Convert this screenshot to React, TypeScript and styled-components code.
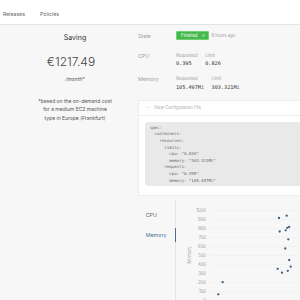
import React from "react";
import styled, { createGlobalStyle } from "styled-components";
import { ChevronDown, RefreshCw } from "lucide-react";

const GlobalStyle = createGlobalStyle`
  html, body {
    margin: 0;
    padding: 0;
    background: #f7f7f7;
    font-family: Inter, "Liberation Sans", sans-serif;
    width: 300px;
    height: 300px;
    overflow: hidden;
  }
`;

const dots = [
  [103, 18], [110.7, 15.7], [103.7, 31.5], [109.7, 30.3], [111.3, 27.8],
  [113.2, 27], [112.3, 39.3], [109.3, 48.5], [113.2, 60], [114.7, 66.7],
  [101.7, 68.8], [106, 72.7], [111.8, 70.8], [46.7, 82.2], [42.3, 94.3],
];

const ticks = [1000, 900, 800, 700, 600, 500, 400, 300, 200, 100, 0];

const config = `spec:
  containers:
    resources:
      limits:
        cpu: "0.826"
        memory: "303.321Mi"
      requests:
        cpu: "0.395"
        memory: "105.497Mi"`;

export default function App() {
  return (
    <Page>
      <GlobalStyle />
      <Header>
        <Tab>Releases</Tab>
        <Tab>Policies</Tab>
      </Header>
      <Main>
        <SavingPanel>
          <SavingTitle>Saving</SavingTitle>
          <Price>€1217.49</Price>
          <PerMonth>/month*</PerMonth>
          <Footnote>
            *based on the on-demand cost
            <br />
            for a medium EC2 machine
            <br />
            type in Europe (Frankfurt)
          </Footnote>
        </SavingPanel>

        <Details>
          <Row $top={0}>
            <Label>State</Label>
            <StateValue>
              <Badge>
                Finished
                <RefreshCw size={5} strokeWidth={2.5} />
              </Badge>
              <Ago>8 hours ago</Ago>
            </StateValue>
          </Row>
          <Row $top={12.6}>
            <Label>CPU</Label>
            <Metrics>
              <Metric>
                <MetricLabel>Requested</MetricLabel>
                <MetricValue>0.395</MetricValue>
              </Metric>
              <Metric>
                <MetricLabel>Limit</MetricLabel>
                <MetricValue>0.826</MetricValue>
              </Metric>
            </Metrics>
          </Row>
          <Row $top={9}>
            <Label>Memory</Label>
            <Metrics>
              <Metric>
                <MetricLabel>Requested</MetricLabel>
                <MetricValue>105.497Mi</MetricValue>
              </Metric>
              <Metric>
                <MetricLabel>Limit</MetricLabel>
                <MetricValue>303.321Mi</MetricValue>
              </Metric>
            </Metrics>
          </Row>

          <ConfigCard>
            <ConfigHeader>
              <ChevronDown size={5} strokeWidth={2} />
              View Configuration File
            </ConfigHeader>
            <ConfigBody>
              <Code>{config}</Code>
            </ConfigBody>
          </ConfigCard>

          <ChartSection>
            <ChartTabs>
              <ChartTab>CPU</ChartTab>
              <ChartTab $active>Memory</ChartTab>
            </ChartTabs>
            <ChartArea>
              <svg width="123" height="100" viewBox="0 0 123 100">
                <text
                  x="0"
                  y="0"
                  transform="translate(14.5 55) rotate(-90)"
                  textAnchor="middle"
                  fontSize="4.4"
                  fill="#aaa"
                  fontFamily="Inter, sans-serif"
                >
                  Memory
                </text>
                {ticks.map((t, i) => {
                  const y = 10.3 + i * 9.02;
                  return (
                    <g key={t}>
                      <line x1="33" x2="123" y1={y} y2={y} stroke="#ececec" strokeWidth="0.5" />
                      <text
                        x="30"
                        y={y + 1.5}
                        textAnchor="end"
                        fontSize="4.2"
                        fill="#999"
                        fontFamily="Inter, sans-serif"
                      >
                        {t}
                      </text>
                    </g>
                  );
                })}
                {dots.map(([x, y], i) => (
                  <circle key={i} cx={x} cy={y} r="1.15" fill="#3b5f82" />
                ))}
              </svg>
            </ChartArea>
          </ChartSection>
        </Details>
      </Main>
    </Page>
  );
}

const Page = styled.div`
  width: 300px;
  height: 300px;
  overflow: hidden;
`;

const Header = styled.div`
  height: 25px;
  box-sizing: border-box;
  padding: 3px 0 0 3px;
  display: flex;
  align-items: center;
  gap: 15px;
  background: #fff;
  border-bottom: 1px solid #e4e4e4;
`;

const Tab = styled.div`
  font-size: 5.2px;
  color: #666;
`;

const Main = styled.div`
  display: flex;
`;

const SavingPanel = styled.div`
  width: 124px;
  flex-shrink: 0;
  padding: 7.5px 0 0 13px;
  text-align: center;
  color: #444;
`;

const SavingTitle = styled.div`
  font-size: 7px;
  line-height: 9px;
  color: #333;
`;

const Price = styled.div`
  margin-top: 13px;
  font-size: 12px;
  line-height: 14px;
  font-weight: 300;
  color: #444;
  padding-right: 8px;
`;

const PerMonth = styled.div`
  margin-top: 7.7px;
  font-size: 5px;
  line-height: 7px;
  font-style: italic;
  color: #555;
`;

const Footnote = styled.div`
  margin-top: 13.8px;
  font-size: 5px;
  line-height: 8.5px;
  color: #555;
`;

const Details = styled.div`
  flex: 1;
  padding: 7.7px 0 0 1px;
  min-width: 0;
`;

const Row = styled.div<{ $top: number }>`
  display: flex;
  align-items: flex-start;
  margin-top: ${(p) => p.$top}px;
`;

const Label = styled.div`
  width: 38px;
  flex-shrink: 0;
  font-size: 5.3px;
  line-height: 6px;
  color: #a0a0a0;
  padding-top: 0;
`;

const StateValue = styled.div`
  display: flex;
  align-items: center;
  gap: 3px;
  margin-top: -1.5px;
`;

const Badge = styled.div`
  display: flex;
  align-items: center;
  gap: 4px;
  height: 9px;
  box-sizing: border-box;
  padding: 0 3px 0 4px;
  width: 32.5px;
  background: #45b74c;
  border: 0.5px solid #6fd073;
  border-radius: 1px;
  color: #fff;
  font-size: 4.2px;
`;

const Ago = styled.div`
  font-size: 4.2px;
  color: #999;
`;

const Metrics = styled.div`
  display: flex;
  gap: 7.5px;
`;

const Metric = styled.div`
  display: flex;
  flex-direction: column;
`;

const MetricLabel = styled.div`
  font-size: 4.3px;
  line-height: 6px;
  color: #a0a0a0;
`;

const MetricValue = styled.div`
  margin-top: 0.7px;
  font-family: "DejaVu Sans Mono", monospace;
  font-size: 5.2px;
  line-height: 8px;
  color: #333;
`;

const ConfigCard = styled.div`
  margin-top: 8.4px;
  margin-right: -20px;
  background: #fff;
  border: 0.5px solid #ececec;
`;

const ConfigHeader = styled.div`
  height: 15.6px;
  box-sizing: border-box;
  display: flex;
  align-items: center;
  gap: 4px;
  padding-left: 6px;
  border-bottom: 0.5px solid #ececec;
  font-size: 4.3px;
  color: #aaa;
`;

const ConfigBody = styled.div`
  padding: 6px 0 9.4px 5.7px;
`;

const Code = styled.pre`
  margin: 0;
  padding: 2.4px 5px 1.5px;
  background: #e9e9e9;
  border-radius: 3px;
  font-family: "DejaVu Sans Mono", monospace;
  font-size: 4.07px;
  line-height: 6.65px;
  color: #666;
`;

const ChartSection = styled.div`
  display: flex;
  margin-top: 3.3px;
  margin-left: -1px;
`;

const ChartTabs = styled.div`
  width: 39px;
  flex-shrink: 0;
  padding-top: 8px;
  border-right: 0.6px solid #e4e4e4;
  display: flex;
  flex-direction: column;
  gap: 6.7px;
  height: 100px;
  box-sizing: border-box;
`;

const ChartTab = styled.div<{ $active?: boolean }>`
  height: 14px;
  display: flex;
  align-items: center;
  padding-left: 8.7px;
  font-size: 5.3px;
  color: ${(p) => (p.$active ? "#4a6f90" : "#666")};
  border-right: 1.4px solid ${(p) => (p.$active ? "#4a6f90" : "transparent")};
  margin-right: -0.6px;
`;

const ChartArea = styled.div`
  flex-shrink: 0;
  display: block;
  svg {
    display: block;
  }
`;
